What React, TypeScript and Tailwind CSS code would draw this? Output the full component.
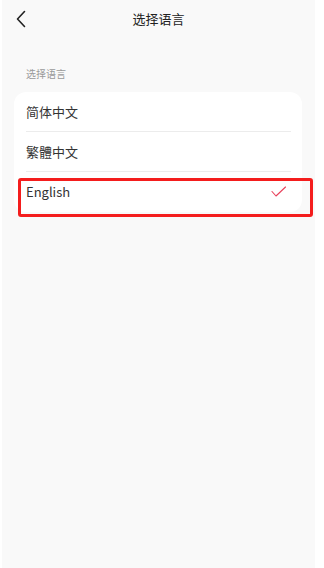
import { useState } from "react";

const langs = ["简体中文", "繁體中文", "English"];

export default function App() {
  const [lang, setLang] = useState<string>("English");

  return (
    <div className="w-[324px] h-[568px] bg-white flex" style={{ fontFamily: '"Noto Sans CJK SC", "Noto Sans", sans-serif' }}>
      <div className="relative ml-[2px] w-[313px] h-full bg-[#f9f9f9]">
        {/* header */}
        <div className="relative h-[38px] flex items-center justify-center">
          <svg className="absolute left-[13px] top-[10px]" width="14" height="18" viewBox="0 0 14 18" fill="none">
            <path d="M9.5 1.5 L2.5 9 L9.5 16.5" stroke="#222" strokeWidth="1.6" strokeLinecap="round" strokeLinejoin="round" />
          </svg>
          <div className="text-[13px] text-[#222]">选择语言</div>
        </div>

        <div className="pl-[24px] pt-[29px] pb-[11px] text-[10px] leading-[14px] text-[#9a9a9a]">选择语言</div>

        <div className="ml-[12px] w-[288px] bg-white rounded-[12px] pl-[12px] pr-[11px]">
          {langs.map((l, i) => (
            <div
              key={l}
              className={"h-[40px] flex items-center justify-between cursor-pointer " + (i < langs.length - 1 ? "border-b border-[#ececec]" : "")}
              onClick={() => setLang(l)}
            >
              <span className="text-[13px] text-[#333]">{l}</span>
              {lang === l && (
                <svg width="16" height="12" viewBox="0 0 16 12" fill="none" className="mr-[4px] -mt-[1px]">
                  <path d="M1 5.5 L5 10 L14.5 1" stroke="#e8405a" strokeWidth="1.1" strokeLinecap="round" strokeLinejoin="round" />
                </svg>
              )}
            </div>
          ))}
        </div>

        {/* annotation box */}
        <div className="absolute left-[16px] top-[178px] w-[295px] h-[39px] border-[3px] border-[#f41d1d] rounded-[3px]" />
      </div>
    </div>
  );
}
